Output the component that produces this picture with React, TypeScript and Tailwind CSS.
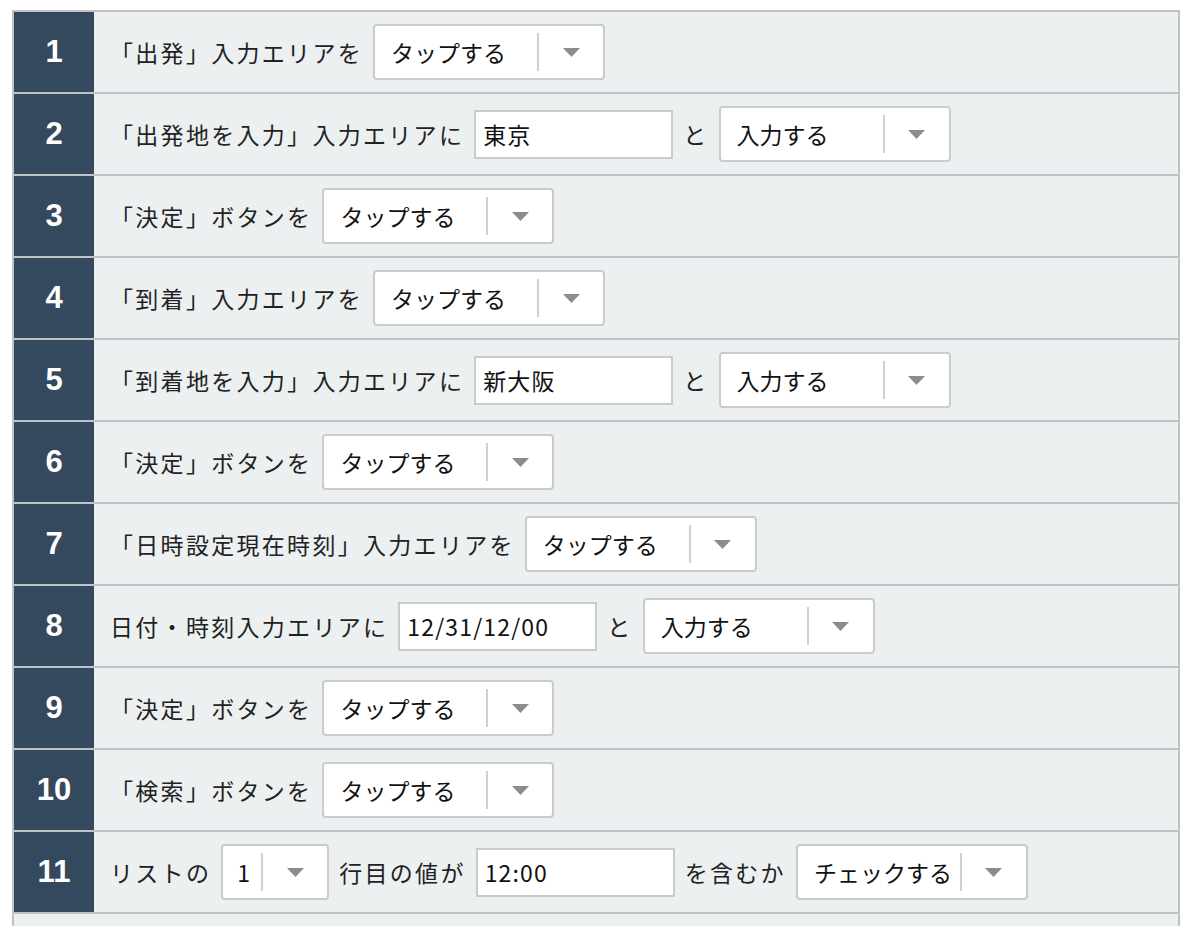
import React from 'react';

type Part =
    | { kind: 'text'; value: string }
    | { kind: 'input'; value: string }
    | { kind: 'select'; value: string; small?: boolean };

const rows: Part[][] = [
    [{ kind: 'text', value: '「出発」入力エリアを' }, { kind: 'select', value: 'タップする' }],
    [
        { kind: 'text', value: '「出発地を入力」入力エリアに' },
        { kind: 'input', value: '東京' },
        { kind: 'text', value: 'と' },
        { kind: 'select', value: '入力する' },
    ],
    [{ kind: 'text', value: '「決定」ボタンを' }, { kind: 'select', value: 'タップする' }],
    [{ kind: 'text', value: '「到着」入力エリアを' }, { kind: 'select', value: 'タップする' }],
    [
        { kind: 'text', value: '「到着地を入力」入力エリアに' },
        { kind: 'input', value: '新大阪' },
        { kind: 'text', value: 'と' },
        { kind: 'select', value: '入力する' },
    ],
    [{ kind: 'text', value: '「決定」ボタンを' }, { kind: 'select', value: 'タップする' }],
    [{ kind: 'text', value: '「日時設定現在時刻」入力エリアを' }, { kind: 'select', value: 'タップする' }],
    [
        { kind: 'text', value: '日付・時刻入力エリアに' },
        { kind: 'input', value: '12/31/12/00' },
        { kind: 'text', value: 'と' },
        { kind: 'select', value: '入力する' },
    ],
    [{ kind: 'text', value: '「決定」ボタンを' }, { kind: 'select', value: 'タップする' }],
    [{ kind: 'text', value: '「検索」ボタンを' }, { kind: 'select', value: 'タップする' }],
    [
        { kind: 'text', value: 'リストの' },
        { kind: 'select', value: '1', small: true },
        { kind: 'text', value: '行目の値が' },
        { kind: 'input', value: '12:00' },
        { kind: 'text', value: 'を含むか' },
        { kind: 'select', value: 'チェックする' },
    ],
];

const jp = { fontFamily: '"Noto Sans CJK JP", "Noto Sans", sans-serif' };

const Select: React.FC<{ value: string; small?: boolean }> = ({ value, small }) => (
    <div
        className={`flex h-[56px] items-center rounded-[4px] border-2 border-[#c9cbcd] bg-white ${
            small ? 'w-[108px]' : 'w-[232px]'
        }`}
    >
        <div className={`flex-1 overflow-hidden whitespace-nowrap text-[23px] text-[#111] ${small ? 'pl-[14px]' : 'pl-[16px]'}`}>
            {value}
        </div>
        <div className="h-[38px] w-[2px] bg-[#cfd0d1]" />
        <div className="flex w-[64px] items-center justify-center">
            {/* caret */}
            <svg width="17" height="9" viewBox="0 0 17 9">
                <polygon points="0,0 17,0 8.5,9" fill="#8c8c8c" />
            </svg>
        </div>
    </div>
);

const Row: React.FC<{ n: number; parts: Part[] }> = ({ n, parts }) => (
    <div className="flex h-[82px] border-b-2 border-[#bdc3c7]">
        <div
            className="flex w-[80px] items-center justify-center bg-[#34495e] text-[31px] font-bold text-white"
            style={{ fontFamily: '"Liberation Sans", Arial, sans-serif' }}
        >
            {n}
        </div>
        <div className="flex flex-1 items-center gap-[10px] pl-[16px]">
            {parts.map((p, i) => {
                if (p.kind === 'text')
                    return (
                        <span key={i} className="whitespace-nowrap text-[23px] tracking-[0.1em] text-[#222]">
                            {p.value}
                        </span>
                    );
                if (p.kind === 'input')
                    return (
                        <div
                            key={i}
                            className="flex h-[49px] w-[199px] items-center border-2 border-[#c9cbcd] bg-white pl-[7px] text-[23px] tracking-[0.05em] text-[#111]"
                        >
                            {p.value}
                        </div>
                    );
                return <Select key={i} value={p.value} small={p.small} />;
            })}
        </div>
    </div>
);

export default function App() {
    return (
        <div className="h-[926px] w-[1190px] overflow-hidden bg-white pl-[12px] pt-[10px]" style={jp}>
            <div className="w-[1168px] border-x-2 border-t-2 border-[#bdc3c7] bg-[#ecf0f1]">
                {rows.map((parts, i) => (
                    <Row key={i} n={i + 1} parts={parts} />
                ))}
                <div className="h-[80px]" />
            </div>
        </div>
    );
}
